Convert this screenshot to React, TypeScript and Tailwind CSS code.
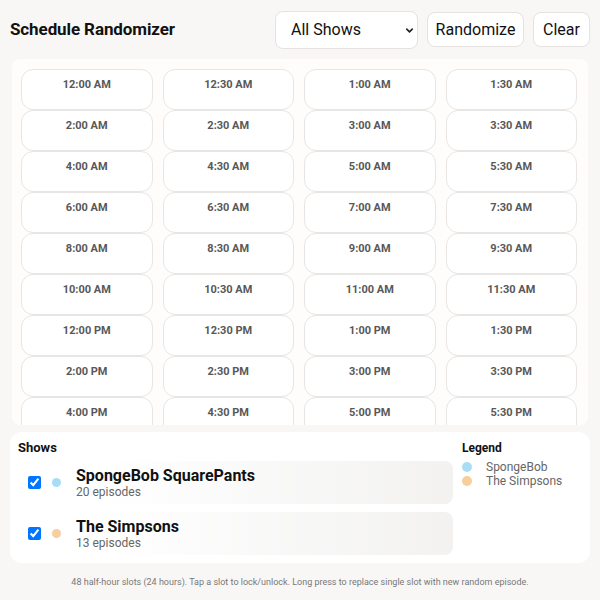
import React from 'react';
import { ChevronDown } from 'lucide-react';

const SLOTS: string[] = Array.from({ length: 48 }, (_, i) => {
  const h = Math.floor(i / 2);
  const m = i % 2 === 0 ? '00' : '30';
  const hour = h % 12 === 0 ? 12 : h % 12;
  return `${hour}:${m} ${h < 12 ? 'AM' : 'PM'}`;
});

const SHOWS = [
  { name: 'SpongeBob SquarePants', short: 'SpongeBob', episodes: 20, dot: 'bg-[#a8ddf5]' },
  { name: 'The Simpsons', short: 'The Simpsons', episodes: 13, dot: 'bg-[#f6cf9d]' },
];

function Slot({ time }: { time: string }) {
  return (
    <div className="h-[41px] rounded-xl border border-[#e8e5e2] bg-white pt-[8px] text-center text-[11px] font-bold leading-[13px] text-[#585858]">
      {time}
    </div>
  );
}

export default function App() {
  return (
    <div className="flex h-[600px] w-[600px] flex-col overflow-hidden bg-[#f9f7f5] font-['Roboto',sans-serif] text-[#111]">
      <header className="flex h-[59px] items-center justify-between px-[10px]">
        <h1 className="text-[17px] font-bold tracking-[-0.1px]">Schedule Randomizer</h1>
        <div className="flex items-center gap-[9px]">
          <div className="relative">
            <select className="h-[38px] w-[143px] appearance-none rounded-lg border border-[#e5e2df] bg-white pl-[15px] text-[16px] outline-none">
              <option>All Shows</option>
            </select>
            <ChevronDown className="pointer-events-none absolute right-[3px] top-[14px] h-[11px] w-[11px] text-[#222]" strokeWidth={3.5} />
          </div>
          <button className="h-[35px] w-[97px] rounded-lg border border-[#e5e2df] bg-white text-[16px]">Randomize</button>
          <button className="h-[35px] w-[57px] rounded-lg border border-[#e5e2df] bg-white text-[16px]">Clear</button>
        </div>
      </header>

      <div className="mx-[12px] h-[366px] overflow-hidden rounded-lg bg-[#fefdfc] pl-[9px] pr-[11px] pt-[10px]">
        <div className="grid grid-cols-4 gap-x-[10px]">
          {SLOTS.map((t) => (
            <Slot key={t} time={t} />
          ))}
        </div>
      </div>

      <section className="mx-[10px] mt-[7px] flex gap-[9px] rounded-xl bg-white px-[7px] pb-[8px] pt-[8px]">
        <div className="w-[436px]">
          <h2 className="mb-[5px] pl-[1px] text-[13px] font-bold leading-[16px]">Shows</h2>
          <div className="flex flex-col gap-[8px]">
            {SHOWS.map((s) => (
              <label key={s.name} className="flex h-[43px] items-center rounded-lg bg-gradient-to-r from-white from-20% to-[#f3f2f1] pl-[11px]">
                <input type="checkbox" defaultChecked className="h-[13px] w-[13px]" />
                <span className={`ml-[11px] h-[9px] w-[9px] rounded-full ${s.dot}`} />
                <span className="ml-[15px] flex flex-col">
                  <span className="text-[16px] font-bold leading-[18px]">{s.name}</span>
                  <span className="text-[12px] leading-[14px] text-[#666]">{s.episodes} episodes</span>
                </span>
              </label>
            ))}
          </div>
        </div>
        <div className="flex-1">
          <h2 className="mb-[4px] text-[12px] font-bold leading-[16px]">Legend</h2>
          {SHOWS.map((s) => (
            <div key={s.short} className="flex items-center text-[12px] leading-[14px] text-[#666]">
              <span className={`h-[10px] w-[10px] rounded-full ${s.dot}`} />
              <span className="ml-[14px]">{s.short}</span>
            </div>
          ))}
        </div>
      </section>

      <p className="mt-[13px] text-center text-[9px] text-[#777]">
        48 half-hour slots (24 hours). Tap a slot to lock/unlock. Long press to replace single slot with new random episode.
      </p>
    </div>
  );
}
